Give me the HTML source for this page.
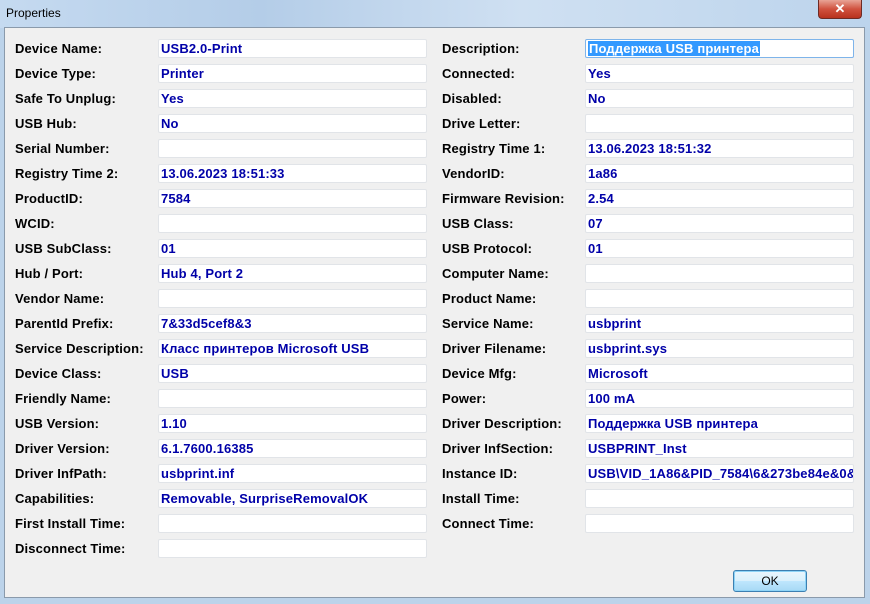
<!DOCTYPE html><html><head><style>
body{margin:0;width:870px;height:604px;overflow:hidden;background:#bcd3ea;font-family:"Liberation Sans","Noto Sans CJK SC",sans-serif;position:relative}
.title{position:absolute;left:0;top:0;width:870px;height:28px;background:linear-gradient(90deg,#c5daf0,#b4cde8 30%,#cfe0f2 60%,#bcd4ec);}
.title span{position:absolute;left:6px;top:6px;font-size:12px;color:#000;font-family:"Liberation Sans",sans-serif}
.close{position:absolute;left:818px;top:0;width:44px;height:19px;border:1px solid #6d2b25;border-top:none;border-radius:0 0 4px 4px;background:linear-gradient(#e8a496,#d0523f 50%,#b8321e);box-sizing:border-box;color:#fff;text-align:center;font-weight:bold;font-size:13px;line-height:17px}
.client{position:absolute;left:4px;top:27px;width:861px;height:571px;background:#f0f0f0;border:1px solid #8a9aab;box-sizing:border-box}
.l{position:absolute;font-size:13px;font-weight:bold;color:#000;letter-spacing:.15px;white-space:nowrap}
.f{position:absolute;width:269px;height:19px;background:#fff;border:1px solid #e1e4e8;box-sizing:border-box;border-radius:2px;font-size:13px;font-weight:bold;color:#0000a8;letter-spacing:.15px;line-height:17px;padding-left:2px;white-space:nowrap;overflow:hidden}
.sel{background:#3399ff;color:#fff;padding:0 1px}
.ok{position:absolute;left:733px;top:570px;width:74px;height:22px;border:1px solid #3c7fb1;border-radius:3px;box-sizing:border-box;background:linear-gradient(#eaf6fd,#d9f0fc 50%,#bee6fd 51%,#a7d9f5);box-shadow:inset 0 0 0 1px #8ed4f7;text-align:center;font-size:12px;line-height:20px}
</style></head><body>
<div class="title"><span>Properties</span></div>
<div class="close">✕</div>
<div class="client"></div>
<div id="c"></div>
<div class="ok">OK</div>
<script>
var L=[["Device Name:","USB2.0-Print"],["Device Type:","Printer"],["Safe To Unplug:","Yes"],["USB Hub:","No"],["Serial Number:",""],["Registry Time 2:","13.06.2023 18:51:33"],["ProductID:","7584"],["WCID:",""],["USB SubClass:","01"],["Hub / Port:","Hub 4, Port 2"],["Vendor Name:",""],["ParentId Prefix:","7&33d5cef8&3"],["Service Description:","Класс принтеров Microsoft USB"],["Device Class:","USB"],["Friendly Name:",""],["USB Version:","1.10"],["Driver Version:","6.1.7600.16385"],["Driver InfPath:","usbprint.inf"],["Capabilities:","Removable, SurpriseRemovalOK"],["First Install Time:",""],["Disconnect Time:",""]];
var R=[["Description:","SEL"],["Connected:","Yes"],["Disabled:","No"],["Drive Letter:",""],["Registry Time 1:","13.06.2023 18:51:32"],["VendorID:","1a86"],["Firmware Revision:","2.54"],["USB Class:","07"],["USB Protocol:","01"],["Computer Name:",""],["Product Name:",""],["Service Name:","usbprint"],["Driver Filename:","usbprint.sys"],["Device Mfg:","Microsoft"],["Power:","100 mA"],["Driver Description:","Поддержка USB принтера"],["Driver InfSection:","USBPRINT_Inst"],["Instance ID:","USB\\VID_1A86&PID_7584\\6&273be84e&0&2"],["Install Time:",""],["Connect Time:",""]];
var h="";
function col(a,lx,fx){a.forEach(function(r,i){var y=39+25*i;
h+='<div class="l" style="left:'+lx+'px;top:'+(y+2)+'px">'+r[0]+'</div>';
var v=r[1]=="SEL"?'<span class="sel">Поддержка USB принтера</span>':r[1].replace(/&/g,'&amp;');
h+='<div class="f" style="left:'+fx+'px;top:'+y+'px'+(r[1]=="SEL"?';border-color:#7eb4ea':'')+'">'+v+'</div>';});}
col(L,15,158);col(R,442,585);
document.getElementById("c").innerHTML=h;
</script>
</body></html>
